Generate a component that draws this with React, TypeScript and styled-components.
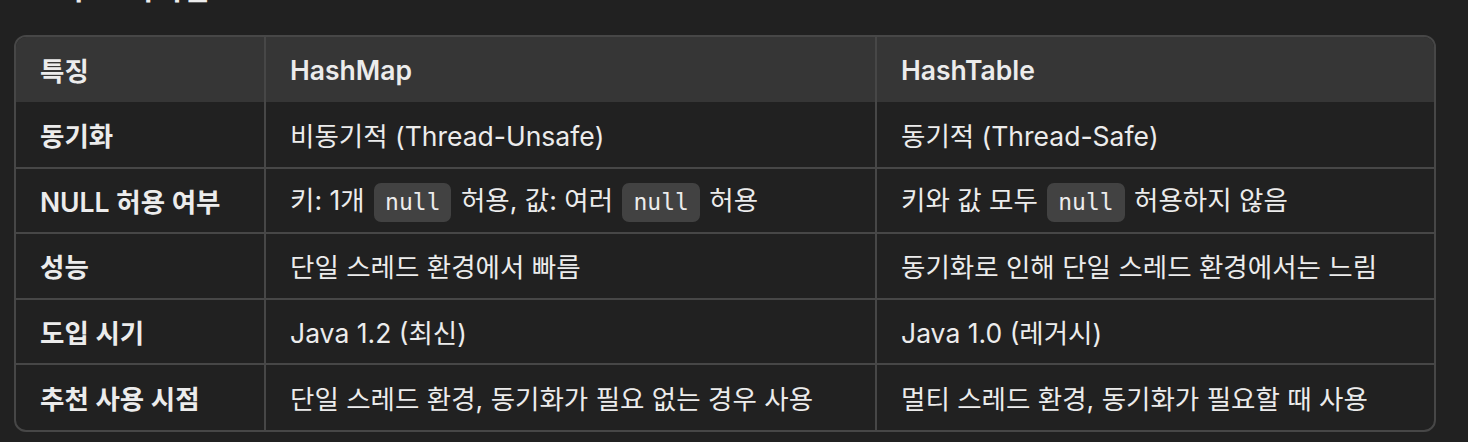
import React from 'react';
import styled, { createGlobalStyle } from 'styled-components';

const GlobalStyle = createGlobalStyle`
  html, body {
    margin: 0;
    padding: 0;
    background: #212121;
    overflow: hidden;
  }
  body {
    font-family: Inter, 'Noto Sans CJK KR', sans-serif;
    color: #ececec;
  }
`;

const Wrap = styled.div`
  width: 1468px;
  height: 442px;
  padding: 0 32px 0 14px;
  box-sizing: border-box;
  overflow: hidden;
`;

const Heading = styled.h3`
  margin: -29px 0 30px 0;
  height: 34px;
  font-size: 30px;
  font-weight: 700;
  line-height: 34px;
  padding-left: 16px;
`;

const TableWrap = styled.div`
  border: 2px solid #474747;
  border-radius: 12px;
  overflow: hidden;
`;

const Table = styled.table`
  width: 100%;
  border-collapse: collapse;
  table-layout: fixed;
`;

const HeadRow = styled.tr`
  background: #363636;
`;

const Cell = styled.td<{ $bold?: boolean; $h: number }>`
  height: ${(p) => p.$h}px;
  padding: 0 24px;
  box-sizing: border-box;
  font-size: 26.5px;
  font-weight: ${(p) => (p.$bold ? 600 : 400)};
  text-align: left;
  white-space: nowrap;
  border-left: 2px solid #474747;
  border-top: 2px solid #474747;
  vertical-align: middle;

  &:first-child {
    border-left: none;
  }
  tr:first-child > & {
    border-top: none;
  }
`;

const Code = styled.code`
  display: inline-block;
  font-family: 'DejaVu Sans Mono', 'Liberation Mono', monospace;
  font-size: 23px;
  line-height: 39px;
  padding: 0 11px;
  background: #424242;
  border-radius: 7px;
  margin: 0 2px;
  vertical-align: middle;
`;

type Row = [string, React.ReactNode, React.ReactNode];

const rows: Row[] = [
  ['동기화', '비동기적 (Thread-Unsafe)', '동기적 (Thread-Safe)'],
  [
    'NULL 허용 여부',
    <>키: 1개 <Code>null</Code> 허용, 값: 여러 <Code>null</Code> 허용</>,
    <>키와 값 모두 <Code>null</Code> 허용하지 않음</>,
  ],
  ['성능', '단일 스레드 환경에서 빠름', '동기화로 인해 단일 스레드 환경에서는 느림'],
  ['도입 시기', 'Java 1.2 (최신)', 'Java 1.0 (레거시)'],
  ['추천 사용 시점', '단일 스레드 환경, 동기화가 필요 없는 경우 사용', '멀티 스레드 환경, 동기화가 필요할 때 사용'],
];

const App = () => {
  return (
    <>
      <GlobalStyle />
      <Wrap>
        <Heading>3. 주요 차이점</Heading>
        <TableWrap>
          <Table>
            <colgroup>
              <col style={{ width: 249 }} />
              <col style={{ width: 611 }} />
              <col />
            </colgroup>
            <thead>
              <HeadRow>
                <Cell as="th" $bold $h={65}>특징</Cell>
                <Cell as="th" $bold $h={65}>HashMap</Cell>
                <Cell as="th" $bold $h={65}>HashTable</Cell>
              </HeadRow>
            </thead>
            <tbody>
              {rows.map((r, i) => (
                <tr key={i}>
                  <Cell $bold $h={65.5}>{r[0]}</Cell>
                  <Cell $h={65.5}>{r[1]}</Cell>
                  <Cell $h={65.5}>{r[2]}</Cell>
                </tr>
              ))}
            </tbody>
          </Table>
        </TableWrap>
      </Wrap>
    </>
  );
};

export default App;
